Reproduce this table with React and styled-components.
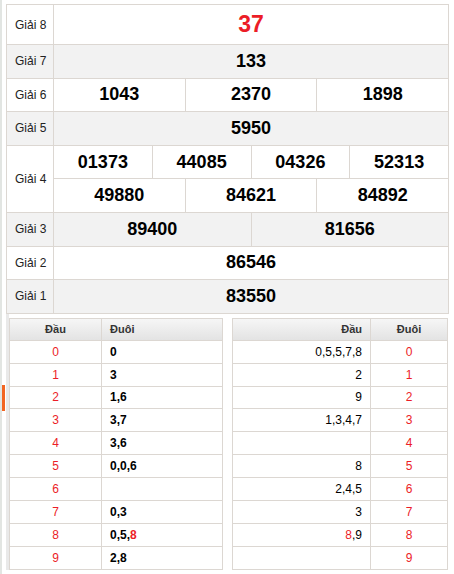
import styled, { createGlobalStyle } from 'styled-components';

const LINE = '#dcd7d2';
const RED = '#ec1d27';

const GlobalStyle = createGlobalStyle`
  html, body {
    margin: 0;
    padding: 0;
    background: #fff;
  }
  body {
    font-family: "Liberation Sans", Arial, sans-serif;
    color: #222;
  }
`;

const Page = styled.div`
  position: relative;
  width: 452px;
  min-height: 574px;
  border-left: 2px solid #e2e5e2;
  padding: 4px 0 0 4px;
  box-sizing: border-box;
`;

const ScrollMark = styled.span`
  position: absolute;
  left: 0;
  top: 385px;
  width: 3px;
  height: 26px;
  background: #f26522;
`;

const Board = styled.div`
  width: 443px;
  border: 1px solid ${LINE};
  box-sizing: border-box;
`;

const PrizeRow = styled.div`
  display: grid;
  grid-template-columns: 47px 1fr;
  background: ${(p) => (p.$shade ? '#f2f2f2' : '#fff')};
  & + & {
    border-top: 1px solid ${LINE};
  }
`;

const Label = styled.div`
  display: flex;
  align-items: center;
  padding-left: 8px;
  border-right: 1px solid ${LINE};
  font-size: 12px;
  color: #222;
`;

const Values = styled.div`
  display: flex;
  flex-direction: column;
`;

const Line = styled.div`
  display: flex;
  height: ${(p) => (p.$tall ? '39px' : '32.6px')};
  & + & {
    border-top: 1px solid ${LINE};
  }
`;

const Num = styled.div`
  flex: 1;
  display: flex;
  align-items: center;
  justify-content: center;
  font-weight: bold;
  font-size: ${(p) => (p.$big ? '23px' : '18px')};
  color: ${(p) => (p.$big ? RED : '#000')};
  & + & {
    border-left: 1px solid ${LINE};
  }
`;

const Lower = styled.div`
  display: grid;
  grid-template-columns: 214px 216px;
  column-gap: 9px;
  padding-top: 4px;
  width: 443px;
  box-sizing: border-box;
  border-left: 3px solid #e9e9e9;
`;

const LoTable = styled.div`
  border: 1px solid ${LINE};
  background: #fff;
`;

const LoRow = styled.div`
  display: grid;
  grid-template-columns: ${(p) => p.$cols};
  height: ${(p) => (p.$head ? '21px' : '21.9px')};
  background: ${(p) => (p.$head ? 'linear-gradient(#f6f6f6, #e3e3e3)' : '#fff')};
  & + & {
    border-top: 1px solid ${LINE};
  }
`;

const LoCell = styled.div`
  display: flex;
  align-items: center;
  justify-content: ${(p) => p.$align || 'center'};
  padding: 0 ${(p) => (p.$align === 'flex-end' ? '8px' : '0')} 0 ${(p) => (p.$align === 'flex-start' ? '8px' : '0')};
  font-size: ${(p) => (p.$head ? '11px' : '12px')};
  font-weight: ${(p) => (p.$bold ? 'bold' : 'normal')};
  color: ${(p) => (p.$red ? RED : p.$head ? '#333' : '#000')};
  & + & {
    border-left: 1px solid ${LINE};
  }
`;

const Red = styled.span`
  color: ${RED};
`;

const prizes = [
  { label: 'Giải 8', lines: [['37']], big: true },
  { label: 'Giải 7', lines: [['133']], shade: true },
  { label: 'Giải 6', lines: [['1043', '2370', '1898']] },
  { label: 'Giải 5', lines: [['5950']], shade: true },
  { label: 'Giải 4', lines: [['01373', '44085', '04326', '52313'], ['49880', '84621', '84892']] },
  { label: 'Giải 3', lines: [['89400', '81656']], shade: true },
  { label: 'Giải 2', lines: [['86546']] },
  { label: 'Giải 1', lines: [['83550']], shade: true },
];

const heads = ['0', '3', '1,6', '3,7', '3,6', '0,0,6', '', '0,3', <>0,5,<Red>8</Red></>, '2,8'];
const tails = ['0,5,5,7,8', '2', '9', '1,3,4,7', '', '8', '2,4,5', '3', <><Red>8</Red>,9</>, ''];

export default function App() {
  return (
    <>
      <GlobalStyle />
      <Page>
        <ScrollMark />
        <Board>
          {prizes.map((p) => (
            <PrizeRow key={p.label} $shade={p.shade}>
              <Label>{p.label}</Label>
              <Values>
                {p.lines.map((line, i) => (
                  <Line key={i} $tall={p.big}>
                    {line.map((n, j) => (
                      <Num key={j} $big={p.big}>{n}</Num>
                    ))}
                  </Line>
                ))}
              </Values>
            </PrizeRow>
          ))}
        </Board>
        <Lower>
          <LoTable>
            <LoRow $head $cols="91px 1fr">
              <LoCell $head $bold>Đầu</LoCell>
              <LoCell $head $bold $align="flex-start">Đuôi</LoCell>
            </LoRow>
            {heads.map((v, i) => (
              <LoRow key={i} $cols="91px 1fr">
                <LoCell $red>{i}</LoCell>
                <LoCell $bold $align="flex-start">{v}</LoCell>
              </LoRow>
            ))}
          </LoTable>
          <LoTable>
            <LoRow $head $cols="137px 1fr">
              <LoCell $head $bold $align="flex-end">Đầu</LoCell>
              <LoCell $head $bold>Đuôi</LoCell>
            </LoRow>
            {tails.map((v, i) => (
              <LoRow key={i} $cols="137px 1fr">
                <LoCell $align="flex-end">{v}</LoCell>
                <LoCell $red>{i}</LoCell>
              </LoRow>
            ))}
          </LoTable>
        </Lower>
      </Page>
    </>
  );
}
